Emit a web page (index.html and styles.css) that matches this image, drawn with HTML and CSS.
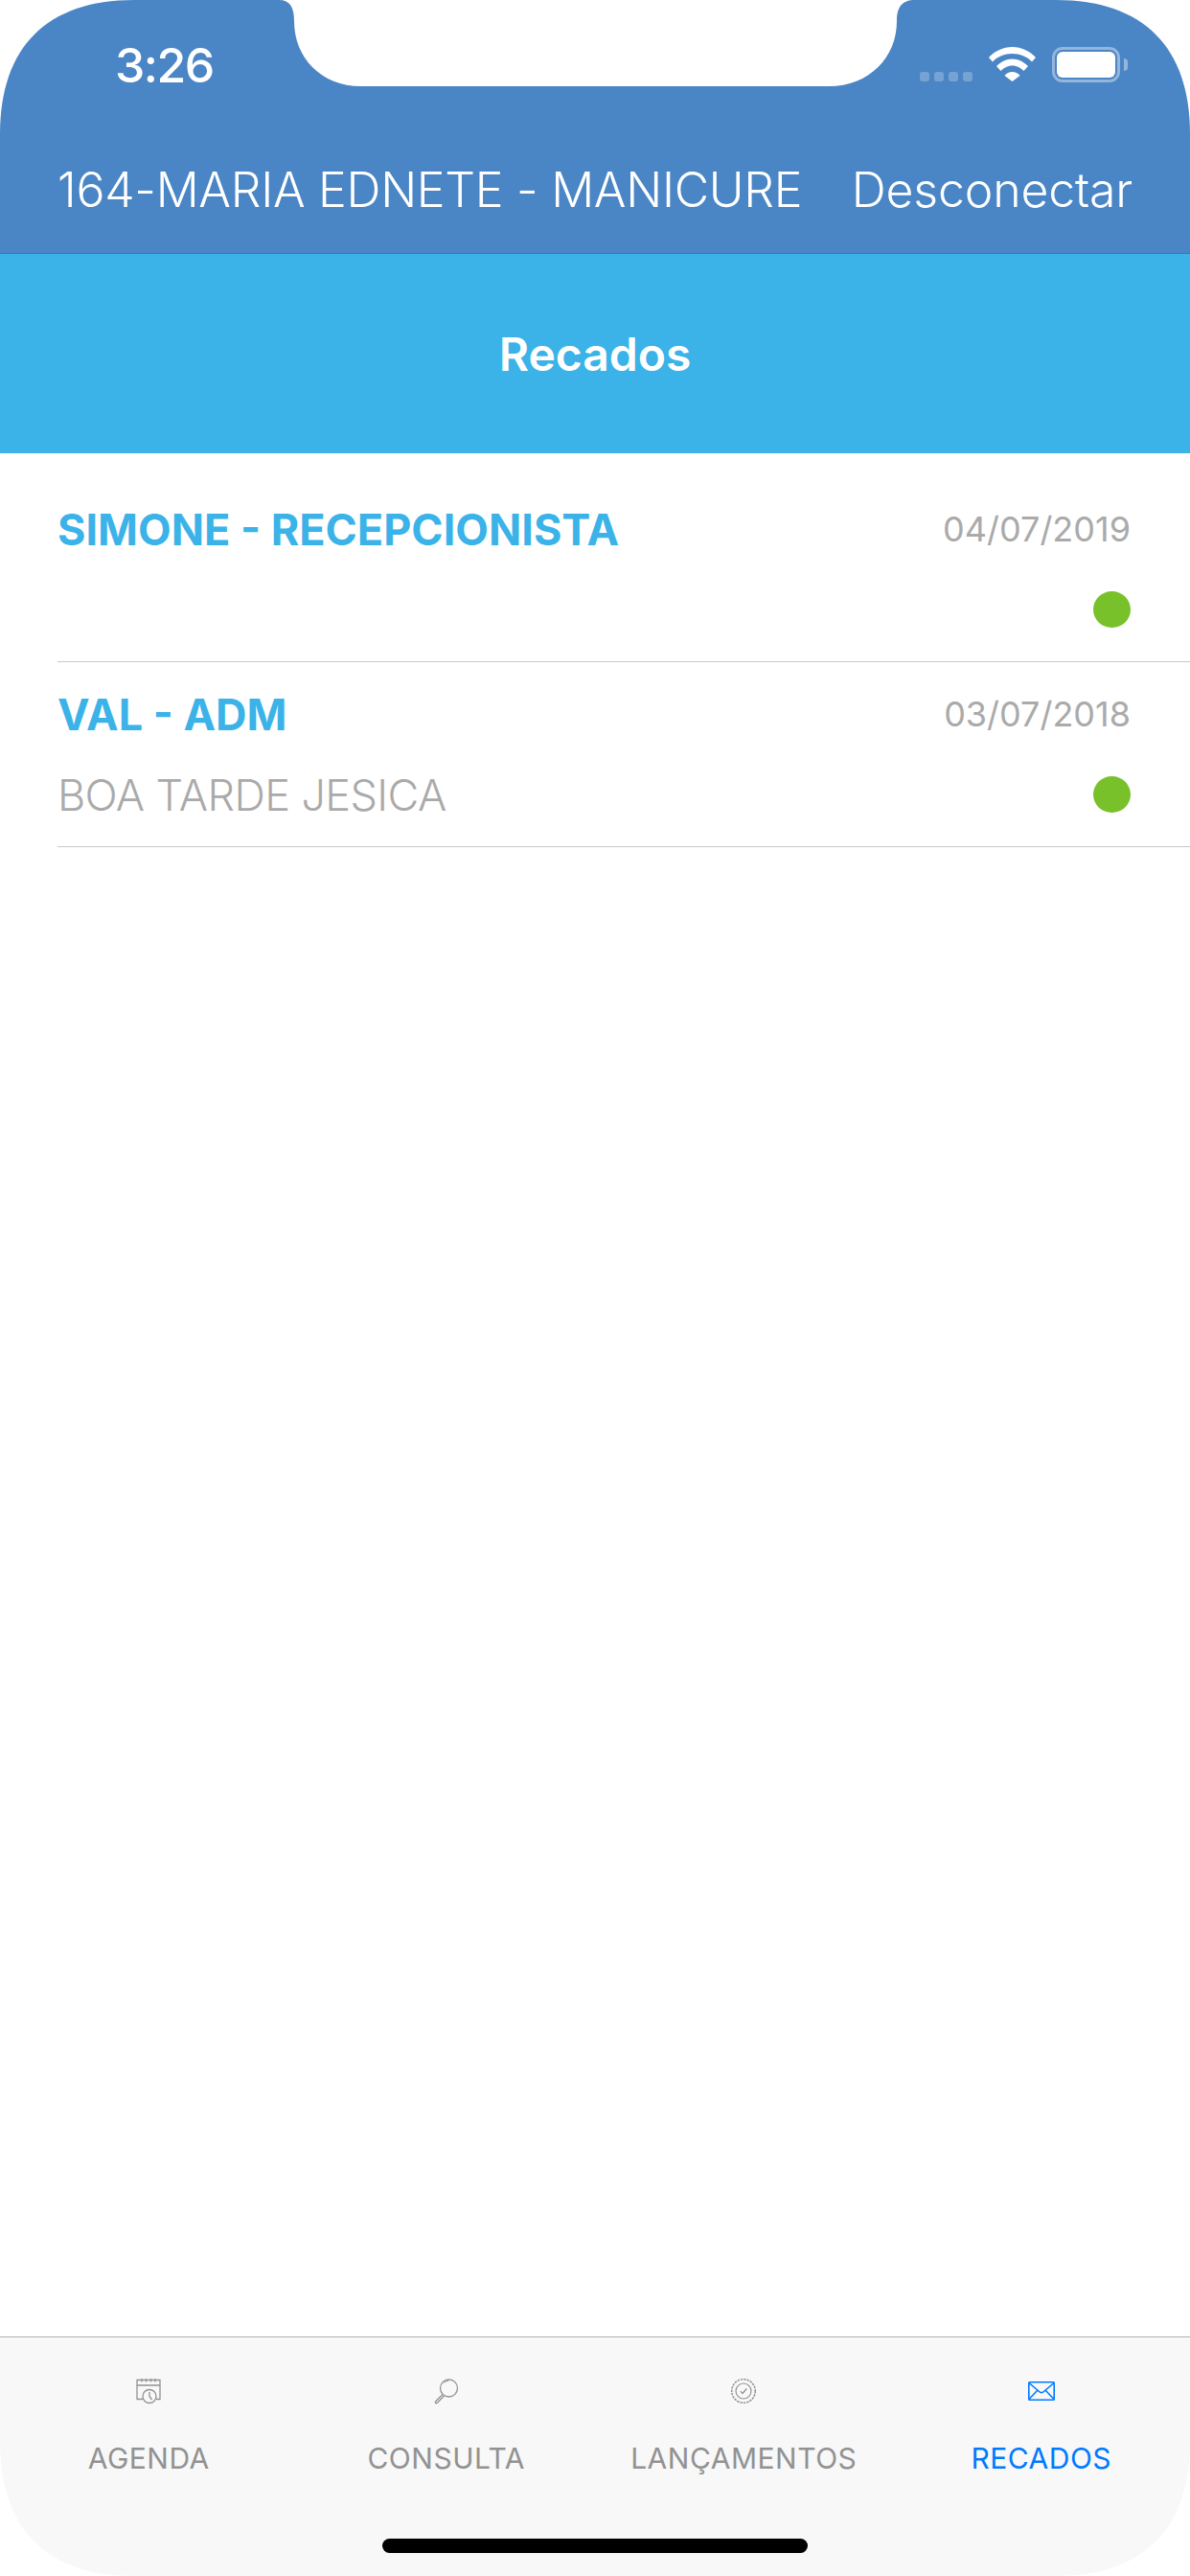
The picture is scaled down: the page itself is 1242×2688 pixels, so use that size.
FILE: index.html
```html
<!DOCTYPE html>
<html lang="pt-BR">

<head>
  <meta charset="UTF-8" />
  <meta name="viewport" content="width=device-width, initial-scale=1.0">
  <title>Recados</title>
  <link rel="stylesheet" href="styles.css">
</head>

<body>
  <div class="screen">
    <!-- Notch over the header -->
    <svg class="notch" width="672" height="90" viewBox="0 0 672 90">
      <path d="M0 0C12 0 16 8 16 22C16 60 44 90 86 90L574 90C616 90 645 60 645 22C645 8 650 0 664 0Z" fill="#fff" />
    </svg>

    <header class="header">
      <div class="status-bar">
        <span class="time">3:26</span>
        <div class="status-icons">
          <div class="signal">
            <span></span><span></span><span></span><span></span>
          </div>
          <svg class="wifi" width="49" height="36" viewBox="0 0 49 36">
            <path d="M0 11C6.500 4 15 0 24.500 0S42.500 4 49 11L45 15.500C40 10 32.500 7 24.500 7S9 10 4 15.500Z" fill="#fff" />
            <path d="M8 20C12.500 15.500 18.200 12.500 24.500 12.500S36.500 15.500 41 20L36.500 25C33.800 22 29.500 19.500 24.500 19.500S15.200 22 12.500 25Z" fill="#fff" />
            <path d="M16.500 30C18.500 27.500 21.300 26 24.500 26S30.500 27.500 32.500 30L24.500 36Z" fill="#fff" />
          </svg>
          <div class="battery">
            <div class="battery-fill"></div>
          </div>
          <div class="battery-nub"></div>
        </div>
      </div>
      <div class="nav-row">
        <span class="nav-title">164-MARIA EDNETE - MANICURE</span>
        <a class="nav-link">Desconectar</a>
      </div>
    </header>

    <div class="page-title">Recados</div>

    <main class="list">
      <div class="row">
        <div class="row-line">
          <span class="row-name">SIMONE - RECEPCIONISTA</span>
          <span class="row-date">04/07/2019</span>
        </div>
        <div class="row-line">
          <span class="row-msg"></span>
          <span class="dot"></span>
        </div>
      </div>
      <div class="row">
        <div class="row-line">
          <span class="row-name">VAL - ADM</span>
          <span class="row-date">03/07/2018</span>
        </div>
        <div class="row-line">
          <span class="row-msg">BOA TARDE JESICA</span>
          <span class="dot"></span>
        </div>
      </div>
    </main>

    <footer class="tab-bar">
      <nav class="tabs">
        <a class="tab">
          <svg class="tab-icon" width="26" height="28" viewBox="0 0 26 28" fill="none" stroke="#929292" stroke-width="1.300">
            <path d="M7.500 22.500H1V2.500H25V22.500H21" />
            <path d="M1 8H25M6 1V4.500M10.500 1V4.500M15.500 1V4.500M20 1V4.500" />
            <circle cx="14" cy="19.500" r="7" fill="#f8f8f8" />
            <path d="M14 15V19.500L16.500 23" />
          </svg>
          <span class="tab-label">AGENDA</span>
        </a>
        <a class="tab">
          <svg class="tab-icon" width="26" height="28" viewBox="0 0 26 28" fill="none" stroke="#929292" stroke-width="1.300">
            <circle cx="15.500" cy="11" r="9" />
            <path d="M10 5.500C11.500 4 13 3.500 15 3.500" stroke-width="1" />
            <path d="M9 17.500L2 24.500C0.500 26 2 27.500 3.500 26.300L10.500 19" />
          </svg>
          <span class="tab-label">CONSULTA</span>
        </a>
        <a class="tab">
          <svg class="tab-icon" width="28" height="28" viewBox="0 0 28 28" fill="none" stroke="#929292">
            <circle cx="14" cy="14" r="12.300" stroke-width="1.500" stroke-dasharray="2.400 1" />
            <circle cx="14" cy="14" r="8" stroke-width="1.200" />
            <path d="M10.800 14.200L13 16.500L17.300 11.500" stroke-width="1.200" />
          </svg>
          <span class="tab-label">LANÇAMENTOS</span>
        </a>
        <a class="tab active">
          <svg class="tab-icon" width="28" height="20" viewBox="0 0 28 20" fill="none" stroke="#007aff" stroke-width="1.600">
            <rect x="0.800" y="0.800" width="26.400" height="18.400" rx="0.800" />
            <path d="M1 1.500L11.500 10.500C13 11.800 15 11.800 16.500 10.500L27 1.500M1 18.500L10 9M27 18.500L18 9" />
          </svg>
          <span class="tab-label">RECADOS</span>
        </a>
      </nav>
      <div class="home-indicator"></div>
    </footer>
  </div>
</body>

</html>
```

FILE: styles.css
```css
* {
  box-sizing: border-box;
  margin: 0;
  padding: 0;
}

html,
body {
  background: #fff;
}

body {
  font-family: Inter, 'Noto Sans', sans-serif;
  color: #333;
}

.screen {
  width: 1242px;
  height: 2688px;
  display: flex;
  flex-direction: column;
  position: relative;
  overflow: hidden;
  clip-path: path("M0 140C0 49 49 0 140 0H1102C1193 0 1242 49 1242 140V2548C1242 2639 1193 2688 1102 2688H140C49 2688 0 2639 0 2548Z");
  background: #fff;
}

.notch {
  position: absolute;
  top: 0;
  left: 291px;
}

.header {
  height: 265px;
  background: #4a85c5;
  border-bottom: 1px solid #2f7fae;
  color: #fff;
}

.status-bar {
  height: 132px;
  display: flex;
  justify-content: space-between;
  padding: 43px 65px 0 120px;
}

.time {
  font-size: 50px;
  line-height: 50px;
  font-weight: 500;
  letter-spacing: -1.5px;
}

.status-icons {
  display: flex;
  align-items: flex-start;
  padding-top: 6px;
}

.signal {
  display: flex;
  gap: 5px;
  margin: 26px 17px 0 0;
}

.signal span {
  width: 10px;
  height: 10px;
  border-radius: 3px;
  background: rgba(255, 255, 255, 0.25);
}

.wifi {
  margin-right: 17px;
}

.battery {
  width: 71px;
  height: 37px;
  padding: 2px;
  border: 3px solid rgba(255, 255, 255, 0.4);
  border-radius: 11px;
}

.battery-fill {
  height: 27px;
  border-radius: 6px;
  background: #fff;
}

.battery-nub {
  width: 4px;
  height: 13px;
  margin: 12px 0 0 4px;
  border-radius: 0 4px 4px 0;
  background: rgba(255, 255, 255, 0.4);
}

.nav-row {
  height: 132px;
  display: flex;
  justify-content: space-between;
  align-items: center;
  padding: 0 60px;
  font-size: 50px;
  font-weight: 300;
}

.nav-title {
  letter-spacing: -0.3px;
}

.nav-link {
  letter-spacing: -0.2px;
}

.page-title {
  height: 208px;
  display: flex;
  align-items: center;
  justify-content: center;
  background: #3bb3e8;
  color: #fff;
  font-size: 48px;
  font-weight: 600;
}

.list {
  flex: 1;
  padding-top: 25px;
}

.row {
  margin-left: 60px;
  padding: 24px 62px 24px 0;
  display: flex;
  flex-direction: column;
  gap: 24px;
  border-bottom: 1px solid #c8c7cc;
}

.row-line {
  height: 60px;
  display: flex;
  justify-content: space-between;
  align-items: center;
}

.row-name {
  color: #3bb3e8;
  font-size: 45px;
  font-weight: 700;
}

.row-date {
  color: #aaa;
  font-size: 36px;
  font-weight: 400;
}

.row-msg {
  color: #aaa;
  font-size: 45px;
  font-weight: 300;
  letter-spacing: -0.6px;
}

.dot {
  width: 39px;
  height: 38px;
  border-radius: 50%;
  background: #78c12b;
}

.tab-bar {
  height: 250px;
  display: flex;
  flex-direction: column;
  background: #f8f8f8;
  border-top: 1px solid #b2b2b2;
}

.tabs {
  display: flex;
}

.tab {
  flex: 1;
  display: flex;
  flex-direction: column;
  align-items: center;
  color: #929292;
}

.tab.active {
  color: #007aff;
}

.tab-icon {
  height: 30px;
  margin-top: 41px;
}

.tab-label {
  margin-top: 37px;
  font-size: 30px;
  line-height: 36px;
  letter-spacing: 0.5px;
}

.home-indicator {
  width: 444px;
  height: 15px;
  margin: auto auto 24px;
  border-radius: 8px;
  background: #000;
}
```
